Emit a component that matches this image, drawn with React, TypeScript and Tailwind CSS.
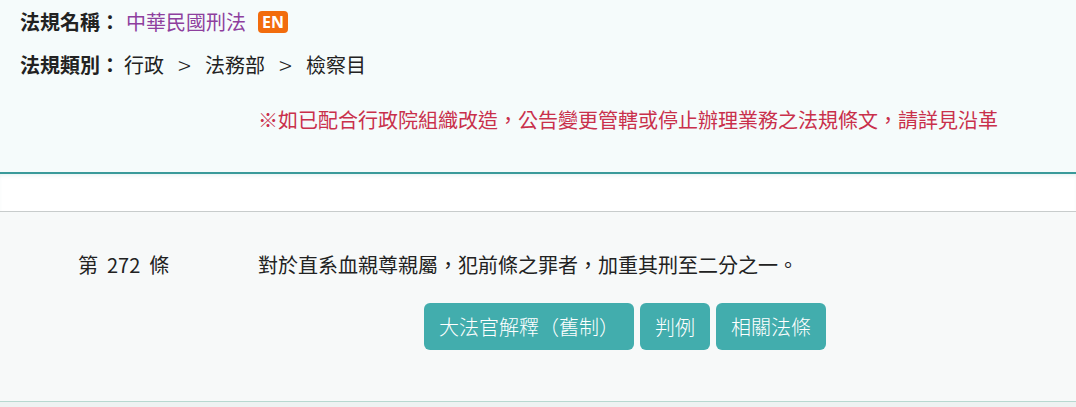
import React from 'react';

const cjk = "font-['Noto_Sans_CJK_TC','Noto_Sans',sans-serif]";

const LawButton: React.FC<{ label: string }> = ({ label }) => (
  <button className="h-[47px] px-[15px] rounded-[6px] bg-[#42adad] text-white text-[20px] font-light leading-none">
    {label}
  </button>
);

const Sep = () => (
  <span className="inline-block w-[41px] text-center text-[24px] font-light leading-[30px]">&gt;</span>
);

export default function App() {
  return (
    <div className={`w-full min-h-[407px] bg-[#eef2f2] text-[#222] ${cjk}`}>
      {/* header info */}
      <section className="bg-[#f5fbfb] border-b-2 border-[#3a9a9a] px-5 pt-[7px] pb-[37px] text-[20px] leading-[30px]">
        <div className="flex items-center">
          <span className="font-bold">法規名稱：</span>
          <a className="ml-[6px] text-[#8e3f9e]">中華民國刑法</a>
          <span className="ml-[12px] h-[22px] px-[4px] rounded-[4px] bg-[#f26c0d] text-white text-[16px] font-bold leading-[22px] font-['Noto_Sans',sans-serif]">
            EN
          </span>
        </div>
        <div className="flex items-center mt-[13px]">
          <span className="font-bold">法規類別：</span>
          <span className="ml-[4px]">行政</span>
          <Sep />
          <span>法務部</span>
          <Sep />
          <span>檢察目</span>
        </div>
        <p className="mt-[25px] ml-[238px] text-[#c9304b]">
          ※如已配合行政院組織改造，公告變更管轄或停止辦理業務之法規條文，請詳見沿革
        </p>
      </section>

      <div className="h-[38px] bg-white border-b border-[#c8cccc] shadow-[inset_0_3px_4px_-2px_rgba(58,154,154,0.15)]" />

      {/* article */}
      <section className="bg-[#f7f9f9] border-b border-[#b8d8d0] pt-[38px] pb-[51px] text-[20px] leading-[30px]">
        <div className="flex">
          <div className="w-[258px] pl-[78px] shrink-0">
            第<span className="mx-[9px]">272</span>條
          </div>
          <div>對於直系血親尊親屬，犯前條之罪者，加重其刑至二分之一。</div>
        </div>
        <div className="ml-[258px] w-[734px] mt-[23px] flex justify-center gap-[6px]">
          <LawButton label="大法官解釋（舊制）" />
          <LawButton label="判例" />
          <LawButton label="相關法條" />
        </div>
      </section>
    </div>
  );
}
